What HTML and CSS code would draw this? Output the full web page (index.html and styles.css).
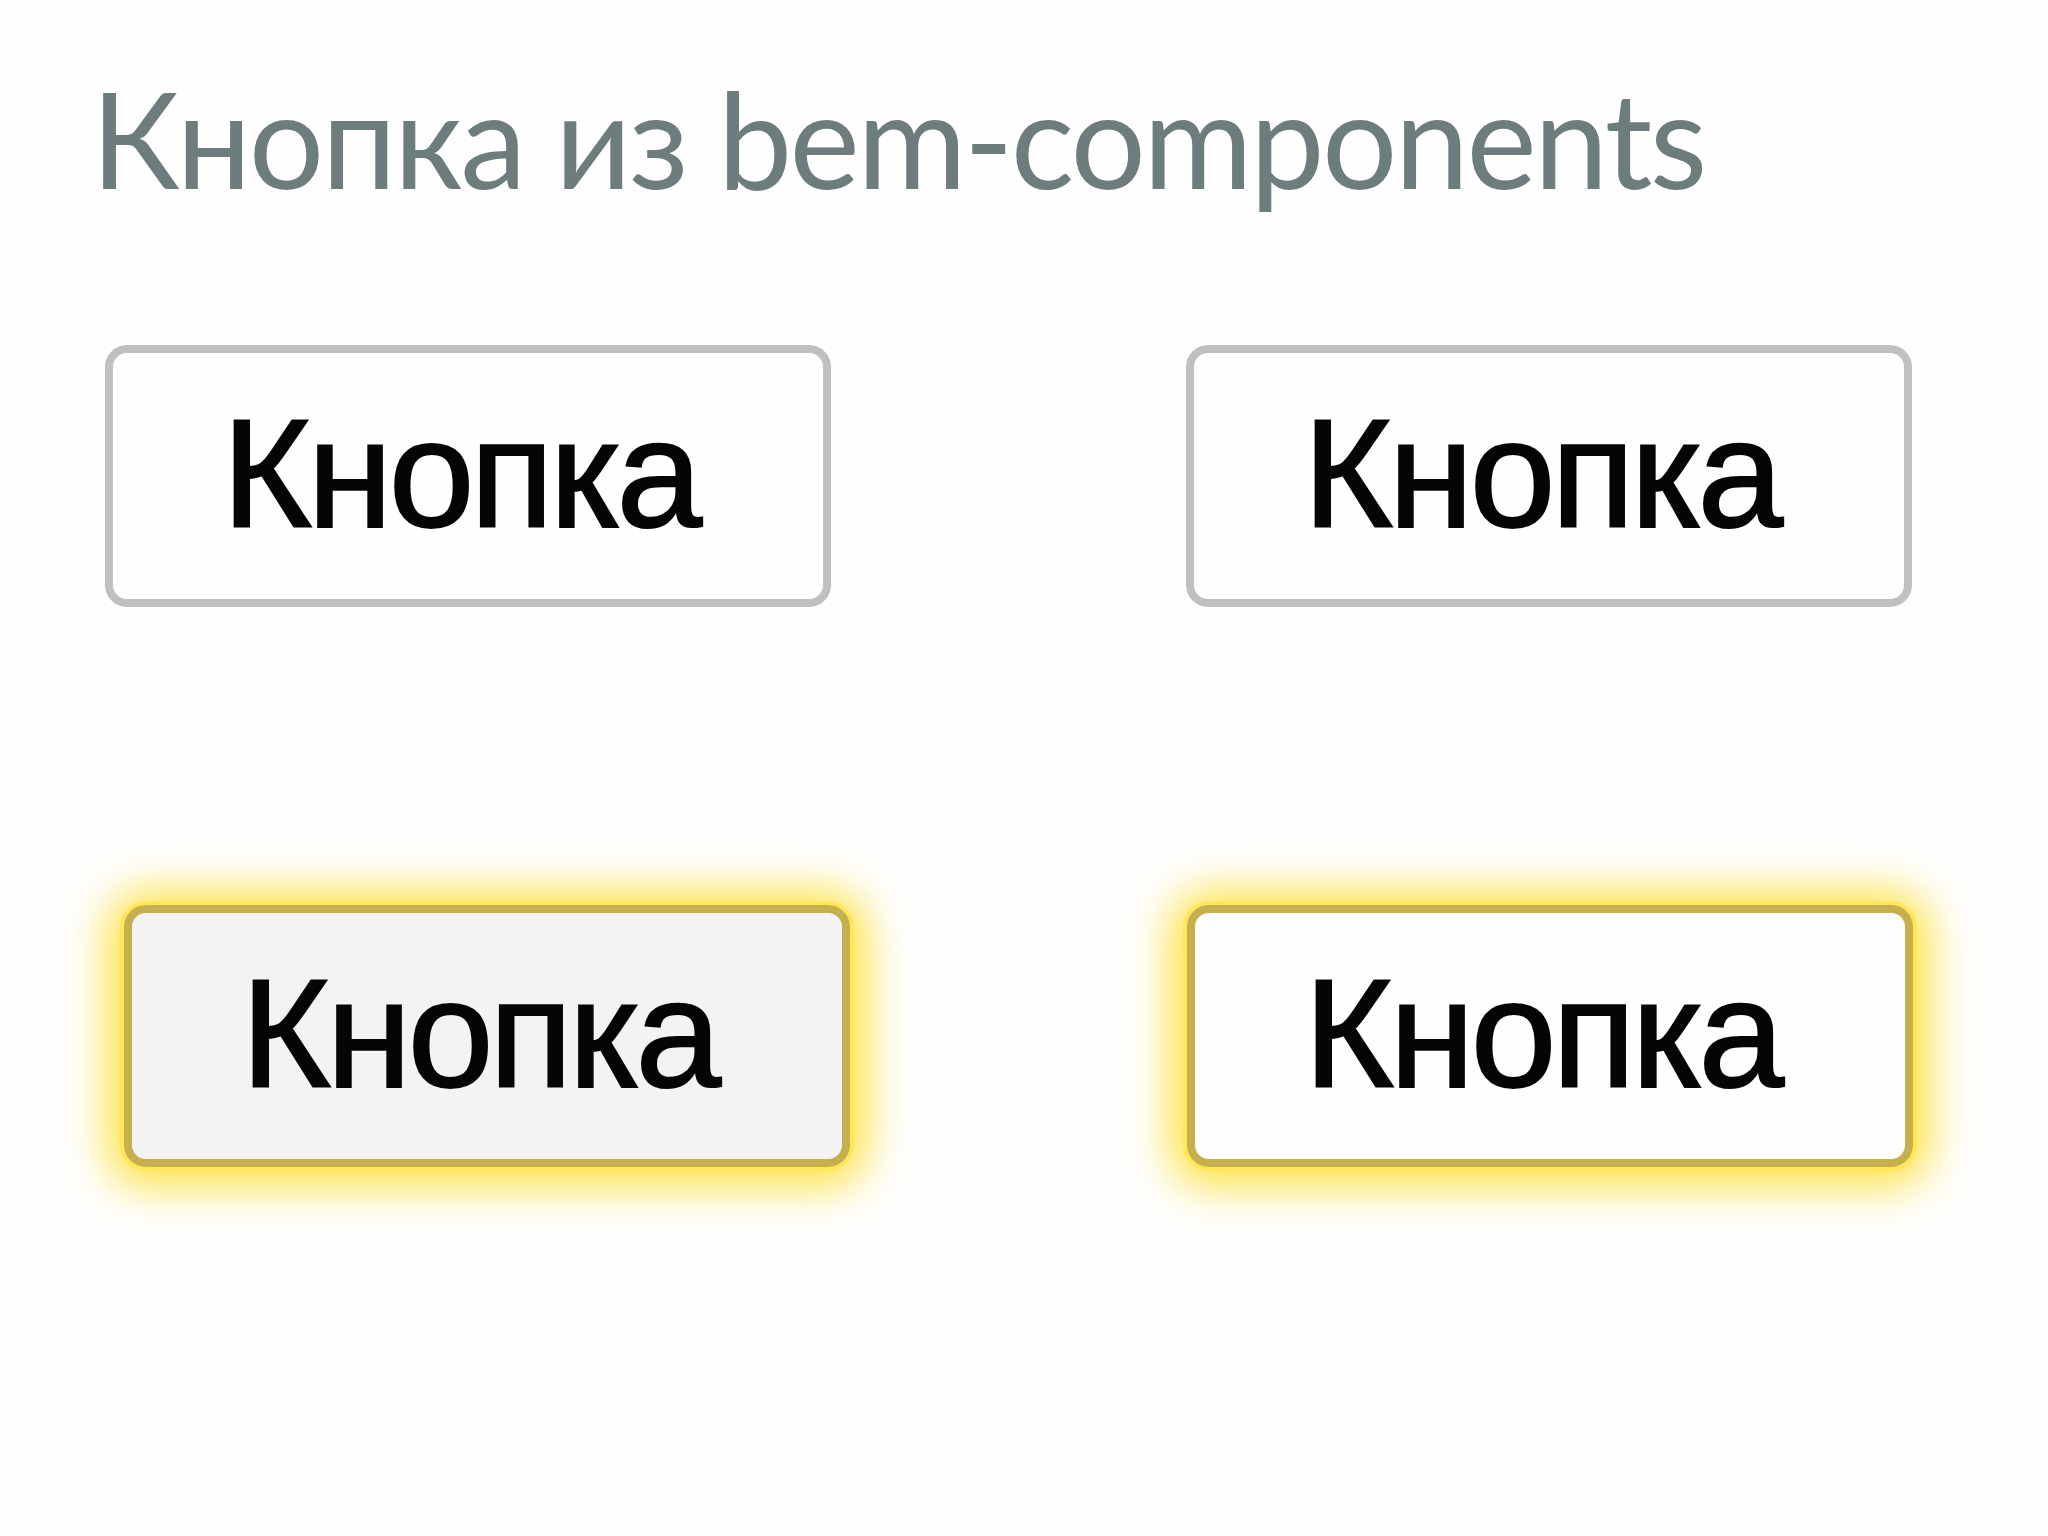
FILE: index.html
```html
<!DOCTYPE html>
<html lang="ru">
<head>
<meta charset="utf-8">
<title>Кнопка из bem-components</title>
<link rel="stylesheet" href="styles.css">
</head>
<body>
<main class="page">
  <h1 class="title">Кнопка из bem-components</h1>
  <div class="row row-plain">
    <button class="btn">Кнопка</button>
    <button class="btn">Кнопка</button>
  </div>
  <div class="row row-focused">
    <button class="btn btn-focused btn-hovered">Кнопка</button>
    <button class="btn btn-focused">Кнопка</button>
  </div>
</main>
</body>
</html>
```
FILE: styles.css
```css
html, body {
  margin: 0;
  padding: 0;
  background: #fefefe;
}
.page {
  width: 2048px;
  height: 1536px;
  box-sizing: border-box;
  padding-top: 58px;
}
.title {
  margin: 0 0 0 91px;
  font-family: Lato, Roboto, "Noto Sans", sans-serif;
  font-weight: 400;
  font-size: 133px;
  line-height: 160px;
  color: #6d7c7d;
  letter-spacing: -2.6px;
}
.row {
  display: flex;
}
.row-plain {
  margin-top: 127px;
  padding-left: 105px;
  gap: 355px;
}
.row-focused {
  margin-top: 298px;
  padding-left: 124px;
  gap: 337px;
}
.btn {
  width: 726px;
  height: 262px;
  box-sizing: border-box;
  border: 8px solid #c0bfc2;
  border-radius: 22px;
  background: #fefefe;
  font-family: "Liberation Sans", Arial, sans-serif;
  font-size: 154px;
  letter-spacing: -4px;
  color: #050505;
  -webkit-text-stroke: 2px #050505;
  padding: 0 16px 4px 0;
  display: flex;
  align-items: center;
  justify-content: center;
}
.btn-focused {
  border-color: #c6b04e;
  box-shadow: 0 0 0 4px rgba(255, 230, 90, 0.95), 0 3px 44px 16px rgba(255, 222, 40, 0.9);
}
.btn-hovered {
  background: #f4f3f4;
}
```
